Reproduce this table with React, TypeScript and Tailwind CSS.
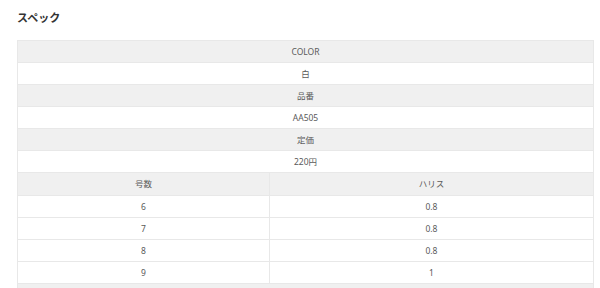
import { Fragment } from 'react';

const specRows: { label: string; value: string }[] = [
  { label: 'COLOR', value: '白' },
  { label: '品番', value: 'AA505' },
  { label: '定価', value: '220円' },
];

const sizeRows = [
  { size: '6', harris: '0.8' },
  { size: '7', harris: '0.8' },
  { size: '8', harris: '0.8' },
  { size: '9', harris: '1' },
];

export default function App() {
  return (
    <div
      className="w-[600px] h-[288px] overflow-hidden bg-white text-[#5a5a5a]"
      style={{ fontFamily: '"Noto Sans", "Noto Sans CJK JP", sans-serif' }}
    >
      <h2 className="pl-[17px] pt-[10px] h-[40px] text-[11px] font-bold text-[#333] leading-[16px]">
        スペック
      </h2>
      <table className="ml-[17px] w-[577px] border-collapse text-[8.5px] leading-none">
        <tbody>
          {specRows.map((row) => (
            <Fragment key={row.label}>
              <tr className="h-[22px] bg-[#f0f0f0]">
                <td colSpan={2} className="border border-[#e8e8e8] pt-px text-center">
                  {row.label}
                </td>
              </tr>
              <tr className="h-[22px] bg-white">
                <td colSpan={2} className="border border-[#e8e8e8] pt-px text-center">
                  {row.value}
                </td>
              </tr>
            </Fragment>
          ))}
          <tr className="h-[23px] bg-[#f0f0f0]">
            <td className="w-[252px] border border-[#e8e8e8] pt-px text-center">号数</td>
            <td className="border border-[#e8e8e8] pt-px text-center">ハリス</td>
          </tr>
          {sizeRows.map((row) => (
            <tr key={row.size} className="h-[22px] bg-white">
              <td className="border border-[#e8e8e8] pt-px text-center">{row.size}</td>
              <td className="border border-[#e8e8e8] pt-px text-center">{row.harris}</td>
            </tr>
          ))}
          <tr className="h-[22px] bg-[#f0f0f0]">
            <td colSpan={2} className="border border-[#e8e8e8]"></td>
          </tr>
        </tbody>
      </table>
    </div>
  );
}
